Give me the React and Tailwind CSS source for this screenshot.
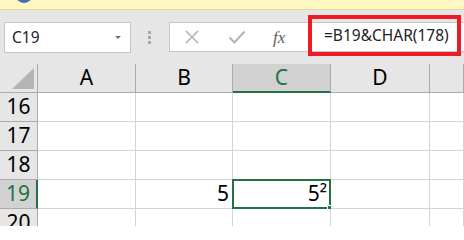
import { Fragment } from 'react';

const COLS = [
  { key: 'A', w: 'w-[98px]' },
  { key: 'B', w: 'w-[97px]' },
  { key: 'C', w: 'w-[98px]' },
  { key: 'D', w: 'w-[99px]' },
  { key: 'E', w: 'flex-1' },
];

const ROWS = [16, 17, 18, 19, 20];

const uiFont = { fontFamily: '"Noto Sans", "Open Sans", sans-serif' };

const Cell = ({ row, col }) => {
  const selected = row === 19 && col.key === 'C';
  let value = null;
  if (row === 19 && col.key === 'B') value = '5';
  if (row === 19 && col.key === 'C') value = '5²';

  return (
    <div
      className={`relative h-[29px] shrink-0 border-r border-b border-[#d4d4d4] bg-white flex items-center justify-end pr-[3px] text-[21px] text-black ${col.w}`}
    >
      {value}
      {selected && (
        <div className="absolute -left-[1px] -top-[1px] -right-[1px] -bottom-[1px] border-2 border-[#217346]">
          <div className="absolute -right-[4px] -bottom-[4px] w-[6px] h-[6px] bg-[#217346] border border-white" />
        </div>
      )}
    </div>
  );
};

const App = () => {
  return (
    <div className="w-[464px] h-[226px] overflow-hidden bg-[#e6e6e6] flex flex-col" style={uiFont}>
      {/* message strip */}
      <div className="relative h-[10px] shrink-0 bg-[#fff7c2] border-b border-[#e3d99a] overflow-hidden">
        <div className="absolute left-[15px] -top-[15px] w-[18px] h-[18px] rounded-full bg-[#3b6fb6]" />
      </div>

      {/* formula bar */}
      <div className="h-[54px] shrink-0 flex items-start pt-[12px] pl-[4px]">
        <div className="w-[127px] h-[31px] bg-white border border-[#c6c6c6] flex items-center justify-between pl-[7px] pr-[9px]">
          <span className="text-[15.5px] text-[#222]">C19</span>
          <span className="w-0 h-0 border-l-[3px] border-r-[3px] border-t-[3px] border-l-transparent border-r-transparent border-t-[#707070]" />
        </div>
        <div className="w-[38px] h-[31px] flex flex-col items-center justify-center gap-[2px] pr-[1px]">
          <span className="w-[3px] h-[3px] bg-[#a8a8a8]" />
          <span className="w-[3px] h-[3px] bg-[#a8a8a8]" />
          <span className="w-[3px] h-[3px] bg-[#a8a8a8]" />
        </div>
        <div className="relative flex-1 h-[30px] bg-white border border-[#c6c6c6] border-r-0 flex items-center">
          <svg width="16" height="14" viewBox="0 0 16 14" className="ml-[14px]">
            <path d="M2 1 L14 13 M14 1 L2 13" stroke="#b4b4b4" strokeWidth="1.6" fill="none" />
          </svg>
          <svg width="18" height="14" viewBox="0 0 18 14" className="ml-[28px]">
            <path d="M1.5 7.5 L6.5 12.5 L16.5 1.5" stroke="#b4b4b4" strokeWidth="2" fill="none" />
          </svg>
          <span
            className="ml-[27px] text-[17px] italic text-[#606060] leading-none"
            style={{ fontFamily: '"Liberation Serif", "DejaVu Serif", serif' }}
          >
            fx
          </span>
          <div className="absolute left-[138px] -top-[8px] w-[153px] h-[41px] border-[4px] border-[#ed1c24] flex items-center pl-[12px]">
            <span className="text-[15.5px] text-[#222] whitespace-nowrap">=B19&amp;CHAR(178)</span>
          </div>
        </div>
      </div>

      {/* column headers */}
      <div className="flex h-[29px] shrink-0 border-b border-[#ababab]">
        <div className="relative w-[38px] shrink-0 border-r border-[#ababab]">
          <svg width="22" height="21" viewBox="0 0 22 21" className="absolute left-[12px] top-[4px]">
            <path d="M22 0 L22 21 L0 21 Z" fill="#b4b4b4" />
          </svg>
        </div>
        {COLS.map((col) => {
          const sel = col.key === 'C';
          return (
            <div
              key={col.key}
              className={`relative shrink-0 flex items-center justify-center text-[21px] border-r border-[#ababab] ${col.w} ${
                sel ? 'bg-[#d2d2d2] text-[#217346] border-b-2 border-b-[#217346] -mb-[1px]' : 'text-black'
              }`}
            >
              {col.key === 'E' ? '' : col.key}
            </div>
          );
        })}
      </div>

      {/* rows */}
      {ROWS.map((row) => {
        const sel = row === 19;
        return (
          <div key={row} className="flex shrink-0">
            <div
              className={`w-[38px] h-[29px] shrink-0 flex items-center justify-center text-[21px] border-b border-[#ababab] ${
                sel
                  ? 'bg-[#d2d2d2] text-[#217346] border-r-2 border-r-[#217346]'
                  : 'bg-[#e6e6e6] text-black border-r border-r-[#ababab]'
              }`}
            >
              {row}
            </div>
            {COLS.map((col) => (
              <Fragment key={col.key}>
                <Cell row={row} col={col} />
              </Fragment>
            ))}
          </div>
        );
      })}
    </div>
  );
};

export default App;
